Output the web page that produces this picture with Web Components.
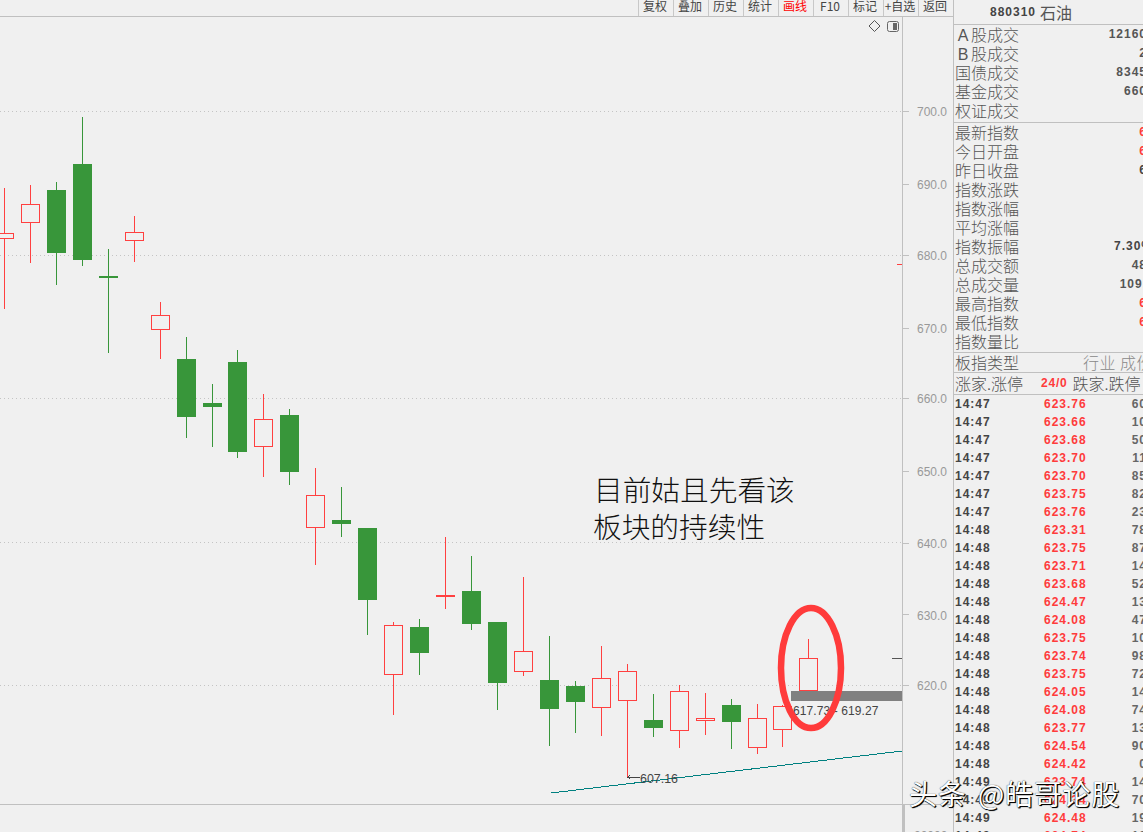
<!DOCTYPE html>
<html lang="zh"><head><meta charset="utf-8"><title>880310 石油</title>
<style>
html,body{margin:0;padding:0;width:1143px;height:832px;overflow:hidden;background:#f0f0f0}
</style></head><body>
<tdx-app></tdx-app>
<script>
const CJK='"Noto Sans CJK SC","Liberation Sans",sans-serif';
const NUM='"Liberation Sans","Noto Sans CJK SC",sans-serif';
class TdxToolbar extends HTMLElement{
  constructor(){super();const s=this.attachShadow({mode:'open'});
    const items=['复权','叠加','历史','统计','画线','F10','标记','+自选','返回'];
    s.innerHTML=`<style>
    :host{display:flex;justify-content:flex-end;height:16px;border-bottom:1px solid #c0c0c0;box-sizing:content-box;overflow:hidden;font:12px/14px ${CJK};color:#444}
    span{display:block;width:34px;border-left:1px solid #c8c8c8;text-align:center;white-space:nowrap;margin-top:-1px;height:17px;text-indent:-2px}
    .on{color:#f00}
    </style>`+items.map(t=>`<span class="${t==='画线'?'on':''}">${t}</span>`).join('');
  }
}
customElements.define('tdx-toolbar',TdxToolbar);

class KChart extends HTMLElement{
  constructor(){super();const s=this.attachShadow({mode:'open'});
    // x, wickTop, wickBottom, bodyTop, bodyBottom, kind (g filled, r hollow, f flat red)
    const D=[[4,188,309,233,238,'r'],[30,185,263,204,222,'r'],[56,182,285,190,253,'g'],[82,117,266,164,260,'g'],
    [108,249,353,276,278,'g'],[134,216,262,232,240,'r'],[160,302,359,315,329,'r'],[186,337,438,359,417,'g'],
    [212,384,447,403,407,'g'],[237,350,458,362,452,'g'],[263,394,477,419,446,'r'],[289,409,485,415,472,'g'],
    [315,468,565,495,527,'r'],[341,487,537,520,524,'g'],[367,528,635,528,600,'g'],[393,622,715,625,674,'r'],
    [419,619,675,627,653,'g'],[445,537,609,595,597,'f'],[471,556,630,591,624,'g'],[497,622,710,622,683,'g'],
    [523,577,676,651,671,'r'],[549,636,746,680,709,'g'],[575,681,733,686,702,'g'],[601,646,736,678,707,'r'],
    [627,664,777,671,700,'r'],[653,694,737,720,728,'g'],[679,685,748,691,730,'r'],[705,693,735,718,720,'r'],
    [731,699,749,705,722,'g'],[757,704,754,718,747,'r'],[782,705,747,706,729,'r'],[808,639,691,658,690,'r']];
    const G='#38963a',R='#ff4040';
    let c='';
    for(const [x,wt,wb,t,b,k] of D){
      const col=k==='g'?G:R;
      c+=`<rect x="${x}" y="${wt}" width="1" height="${wb-wt}" fill="${col}"/>`;
      if(k==='g')c+=`<rect x="${x-9}" y="${t}" width="19" height="${b-t}" fill="${G}"/>`;
      else if(k==='f')c+=`<rect x="${x-9}" y="${t}" width="19" height="${b-t}" fill="${R}"/>`;
      else c+=`<rect x="${x-8.5}" y="${t+.5}" width="18" height="${b-t}" fill="#f0f0f0" stroke="${R}"/>`;
    }
    const grid=[111,255,398,542,685].map(y=>`<line x1="0" x2="902" y1="${y+.5}" y2="${y+.5}" stroke="#c4c4c4" stroke-dasharray="1 3"/>`).join('');
    s.innerHTML=`<style>
    :host{display:block;position:relative;width:902px;height:787px}
    svg{position:absolute;left:0;top:-17px;display:block;overflow:visible}
    text{font:12px ${NUM};fill:#444}
    .note{position:absolute;left:594px;top:453px;font:28.7px/37px ${CJK};color:#111;white-space:nowrap;font-weight:300}
    .note div:nth-child(2){margin-left:-1px}
    </style>
    <svg width="902" height="804" viewBox="0 0 902 804" shape-rendering="crispEdges">
      ${grid}
      ${c}
      <line x1="551" y1="793" x2="902" y2="751" stroke="#008080"/>
      <rect x="791" y="691" width="111" height="10" fill="#808080"/>
      <rect x="897" y="264" width="5" height="1" fill="#ff4040"/>
      <rect x="892" y="658" width="10" height="1" fill="#555"/>
      <rect x="627" y="777" width="13" height="1" fill="#444"/>
      <path d="M627 777l3-2v1l-2 1 2 1v1z" fill="#444"/>
      <text x="640" y="783" textLength="38" lengthAdjust="spacingAndGlyphs">607.16</text>
      <text x="793" y="715" letter-spacing=".1">617.73 - 619.27</text>
      <g shape-rendering="geometricPrecision">
        <ellipse cx="811" cy="668" rx="30" ry="60" fill="none" stroke="#ff3b3b" stroke-width="6.5"/>
        <path d="M874.5 20.5l5.5 5.5-5.5 5.5-5.5-5.5z" fill="none" stroke="#555"/>
        <rect x="887.5" y="21.5" width="11" height="10" rx="2" fill="#f0f0f0" stroke="#666"/>
        <rect x="893" y="23" width="4" height="7" fill="#666"/>
      </g>
    </svg>
    <div class="note"><div>目前姑且先看该</div><div>板块的持续性</div></div>`;
  }
}
customElements.define('k-chart',KChart);

class PriceAxis extends HTMLElement{
  constructor(){super();const s=this.attachShadow({mode:'open'});
    const L=[[700,111,111],[690,184,184],[680,255,255],[670,328,328],[660,398,398],[650,471,471],[640,543,543],[630,614,615],[620,685,685]];
    s.innerHTML=`<style>
    :host{display:block;position:relative;width:50px;height:787px;border-left:1px solid #c0c0c0}
    svg{position:absolute;left:0;top:-17px;display:block}
    text{font:12px ${NUM};fill:#999}
    </style><svg width="50" height="804" viewBox="903 0 50 804">`+
    L.map(([v,y,ty])=>`<rect x="903" y="${y}" width="6" height="1" fill="#c0c0c0"/><text x="917" y="${ty+5}">${v}.0</text>`).join('')+`</svg>`;
  }
}
customElements.define('price-axis',PriceAxis);

class SubAxis extends HTMLElement{
  constructor(){super();const s=this.attachShadow({mode:'open'});
    s.innerHTML=`<style>
    :host{display:flex;height:27px;border-top:1px solid #c0c0c0;overflow:hidden}
    .l{width:902px;flex:none}
    .r{width:51px;flex:none;border-left:3px solid #c0c0c0;font:12px/14px ${NUM};color:#999;padding:24px 0 0 9px;box-sizing:border-box}
    </style><div class="l"></div><div class="r">20000</div>`;
  }
}
customElements.define('sub-axis',SubAxis);

class InfoRow extends HTMLElement{
  connectedCallback(){
    const lab=this.getAttribute('label')||'',val=this.getAttribute('value')||'',tone=this.getAttribute('tone')||'';
    const m=/^[AB](?=股)/.exec(lab);
    const labHtml=m?`<i>${m[0]}</i>${lab.slice(1)}`:lab;
    const s=this.attachShadow({mode:'open'});
    s.innerHTML=`<style>
    :host{display:flex;justify-content:space-between;height:19px;font:16px/19px ${CJK};color:#555;white-space:nowrap;font-weight:300}
    i{display:inline-block;width:16px;text-align:center;font-style:normal;font-family:${NUM}}
    b{font:bold 12px/19px ${NUM};letter-spacing:1px;color:#555}
    b.r{color:#ff3b3b} b.d{color:#444} b.pct{color:#444;margin-right:-6px}
    </style><span>${labHtml}</span><b class="${tone}">${val}</b>`;
  }
}
customElements.define('info-row',InfoRow);

class TickRow extends HTMLElement{
  connectedCallback(){
    const [t,p,v]=(this.getAttribute('data')||'').split(' ');
    const s=this.attachShadow({mode:'open'});
    s.innerHTML=`<style>
    :host{display:grid;grid-template-columns:89px 44px 1fr;height:18px;font:bold 12px/18px ${NUM};letter-spacing:1px;white-space:nowrap}
    .t{color:#444}.p{color:#ff3b3b}.v{color:#666;text-align:right}
    </style><span class="t">${t}</span><span class="p">${p}</span><span class="v">${v}</span>`;
  }
}
customElements.define('tick-row',TickRow);

class InfoPanel extends HTMLElement{
  constructor(){super();const s=this.attachShadow({mode:'open'});
    const A=[['A股成交','12160'],['B股成交','2'],['国债成交','8345'],['基金成交','660'],['权证成交','']];
    const B=[['最新指数','6','r'],['今日开盘','6','r'],['昨日收盘','6','d'],['指数涨跌',''],['指数涨幅',''],['平均涨幅',''],
      ['指数振幅','7.30%','pct'],['总成交额','48'],['总成交量','109.'],['最高指数','6','r'],['最低指数','6','r'],['指数量比','']];
    const T=`14:47 623.76 60|14:47 623.66 10|14:47 623.68 50|14:47 623.70 11|14:47 623.70 85|14:47 623.75 82|14:47 623.76 23|14:48 623.31 78|14:48 623.75 87|14:48 623.71 14|14:48 623.68 52|14:48 624.47 13|14:48 624.08 47|14:48 623.75 10|14:48 623.74 98|14:48 623.75 72|14:48 624.05 14|14:48 624.08 74|14:48 623.77 13|14:48 624.54 90|14:48 624.42 0|14:49 623.74 14|14:49 624.34 70|14:49 624.48 19|14:49 624.74 12`.split('|');
    const row=([l,v,t])=>`<info-row label="${l}" value="${v}" tone="${t||''}"></info-row>`;
    s.innerHTML=`<style>
    :host{display:block;width:194px;flex:none;box-sizing:border-box;font-family:${CJK};color:#555}
    .head{height:24px;border-bottom:1px solid #c0c0c0;display:flex;align-items:center;gap:4px;padding-left:36px}
    .head b{font:bold 12px ${NUM};letter-spacing:1px;color:#444}
    .head span{font:16px/24px ${CJK}}
    .blk{border-bottom:1px solid #c0c0c0;padding:0 0 0 1px}
    .b1{height:97px}
    .b2{height:229px}
    .type{height:19px;border-bottom:1px solid #c0c0c0;padding-left:1px;display:flex;justify-content:space-between;font:16px/18px ${CJK};white-space:nowrap;font-weight:300}
    .type em{font-style:normal;color:#888;letter-spacing:.5px;width:66px;flex:none;margin-right:-2px}
    .ud{height:21px;border-bottom:1px solid #c0c0c0;padding-left:1px;display:flex;font:16px/20px ${CJK};white-space:nowrap;font-weight:300}
    .ud b{font:bold 12px/20px ${NUM};letter-spacing:.8px;color:#ff3b3b;margin:0 5px 0 18px}
    .ticks{padding-left:1px}
    </style>
    <div class="head"><b>880310</b><span>石油</span></div>
    <div class="blk b1">${A.map(row).join('')}</div>
    <div class="blk b2">${B.map(row).join('')}</div>
    <div class="type"><span>板指类型</span><em>行业 成份</em></div>
    <div class="ud"><span>涨家.涨停</span><b>24/0</b><span>跌家.跌停</span></div>
    <div class="ticks">${T.map(d=>`<tick-row data="${d}"></tick-row>`).join('')}</div>`;
  }
}
customElements.define('info-panel',InfoPanel);

class TdxApp extends HTMLElement{
  constructor(){super();const s=this.attachShadow({mode:'open'});
    s.innerHTML=`<style>
    :host{display:flex;position:relative;width:1143px;height:832px;overflow:hidden;background:#f0f0f0}
    .main{width:953px;flex:none;display:flex;flex-direction:column}
    .plot{display:flex;height:787px}
    info-panel{border-left:1px solid #c0c0c0}
    .mark{position:absolute;left:909px;top:774px;font:400 28px/38px ${CJK};color:#fff;text-shadow:1px 1px 1px #000,0 0 1px #000,1px 1px 0 #222;white-space:nowrap;letter-spacing:.8px;word-spacing:4px}
    </style>
    <div class="main">
      <tdx-toolbar></tdx-toolbar>
      <div class="plot"><k-chart></k-chart><price-axis></price-axis></div>
      <sub-axis></sub-axis>
    </div>
    <info-panel></info-panel>
    <div class="mark">头条 @皓哥论股</div>`;
  }
}
customElements.define('tdx-app',TdxApp);
</script>
</body></html>
